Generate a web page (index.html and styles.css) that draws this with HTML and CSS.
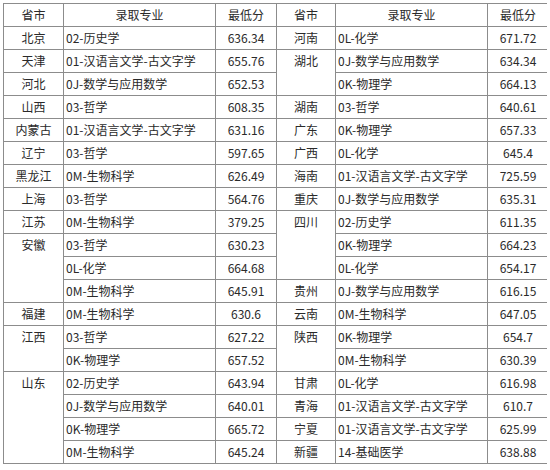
FILE: index.html
```html
<!DOCTYPE html>
<html lang="zh">
<head>
<meta charset="utf-8">
<link rel="stylesheet" href="styles.css">
</head>
<body>
<table class="score-table">
<colgroup>
<col class="c-prov"><col class="c-major"><col class="c-score">
<col class="c-prov2"><col class="c-major"><col class="c-score">
</colgroup>
<thead>
<tr><th>省市</th><th>录取专业</th><th>最低分</th><th>省市</th><th>录取专业</th><th>最低分</th></tr>
</thead>
<tbody>
<tr><td class="prov">北京</td><td class="major">02-历史学</td><td class="score">636.34</td><td class="prov">河南</td><td class="major">0L-化学</td><td class="score">671.72</td></tr>
<tr><td class="prov">天津</td><td class="major">01-汉语言文学-古文字学</td><td class="score">655.76</td><td class="prov" rowspan="2">湖北</td><td class="major">0J-数学与应用数学</td><td class="score">634.34</td></tr>
<tr><td class="prov">河北</td><td class="major">0J-数学与应用数学</td><td class="score">652.53</td><td class="major">0K-物理学</td><td class="score">664.13</td></tr>
<tr><td class="prov">山西</td><td class="major">03-哲学</td><td class="score">608.35</td><td class="prov">湖南</td><td class="major">03-哲学</td><td class="score">640.61</td></tr>
<tr><td class="prov">内蒙古</td><td class="major">01-汉语言文学-古文字学</td><td class="score">631.16</td><td class="prov">广东</td><td class="major">0K-物理学</td><td class="score">657.33</td></tr>
<tr><td class="prov">辽宁</td><td class="major">03-哲学</td><td class="score">597.65</td><td class="prov">广西</td><td class="major">0L-化学</td><td class="score">645.4</td></tr>
<tr><td class="prov">黑龙江</td><td class="major">0M-生物科学</td><td class="score">626.49</td><td class="prov">海南</td><td class="major">01-汉语言文学-古文字学</td><td class="score">725.59</td></tr>
<tr><td class="prov">上海</td><td class="major">03-哲学</td><td class="score">564.76</td><td class="prov">重庆</td><td class="major">0J-数学与应用数学</td><td class="score">635.31</td></tr>
<tr><td class="prov">江苏</td><td class="major">0M-生物科学</td><td class="score">379.25</td><td class="prov" rowspan="3">四川</td><td class="major">02-历史学</td><td class="score">611.35</td></tr>
<tr><td class="prov" rowspan="3">安徽</td><td class="major">03-哲学</td><td class="score">630.23</td><td class="major">0K-物理学</td><td class="score">664.23</td></tr>
<tr><td class="major">0L-化学</td><td class="score">664.68</td><td class="major">0L-化学</td><td class="score">654.17</td></tr>
<tr><td class="major">0M-生物科学</td><td class="score">645.91</td><td class="prov">贵州</td><td class="major">0J-数学与应用数学</td><td class="score">616.15</td></tr>
<tr><td class="prov">福建</td><td class="major">0M-生物科学</td><td class="score">630.6</td><td class="prov">云南</td><td class="major">0M-生物科学</td><td class="score">647.05</td></tr>
<tr><td class="prov" rowspan="2">江西</td><td class="major">03-哲学</td><td class="score">627.22</td><td class="prov" rowspan="2">陕西</td><td class="major">0K-物理学</td><td class="score">654.7</td></tr>
<tr><td class="major">0K-物理学</td><td class="score">657.52</td><td class="major">0M-生物科学</td><td class="score">630.39</td></tr>
<tr><td class="prov" rowspan="4">山东</td><td class="major">02-历史学</td><td class="score">643.94</td><td class="prov">甘肃</td><td class="major">0L-化学</td><td class="score">616.98</td></tr>
<tr><td class="major">0J-数学与应用数学</td><td class="score">640.01</td><td class="prov">青海</td><td class="major">01-汉语言文学-古文字学</td><td class="score">610.7</td></tr>
<tr><td class="major">0K-物理学</td><td class="score">665.72</td><td class="prov">宁夏</td><td class="major">01-汉语言文学-古文字学</td><td class="score">625.99</td></tr>
<tr><td class="major">0M-生物科学</td><td class="score">645.24</td><td class="prov">新疆</td><td class="major">14-基础医学</td><td class="score">638.88</td></tr>
</tbody>
</table>
</body>
</html>
```

FILE: styles.css
```css
html, body {
  background: #ffffff;
}
body {
  margin: 3px;
  font-family: "Noto Sans CJK SC", "Noto Sans", sans-serif;
  font-size: 12px;
  color: #2a2a2a;
}
.score-table {
  border-collapse: collapse;
  table-layout: fixed;
  width: 545px;
}
.c-prov { width: 60px; }
.c-prov2 { width: 59px; }
.c-major { width: 152px; }
.c-score { width: 61px; }
.score-table th,
.score-table td {
  border: 1px solid #8c8c8c;
  height: 22px;
  padding: 0;
  line-height: 22px;
  white-space: nowrap;
  overflow: hidden;
}
.score-table th {
  font-weight: normal;
  text-align: center;
}
.prov {
  text-align: center;
  vertical-align: top;
}
.major {
  text-align: left;
  padding-left: 2px !important;
}
.score {
  text-align: center;
}
```
